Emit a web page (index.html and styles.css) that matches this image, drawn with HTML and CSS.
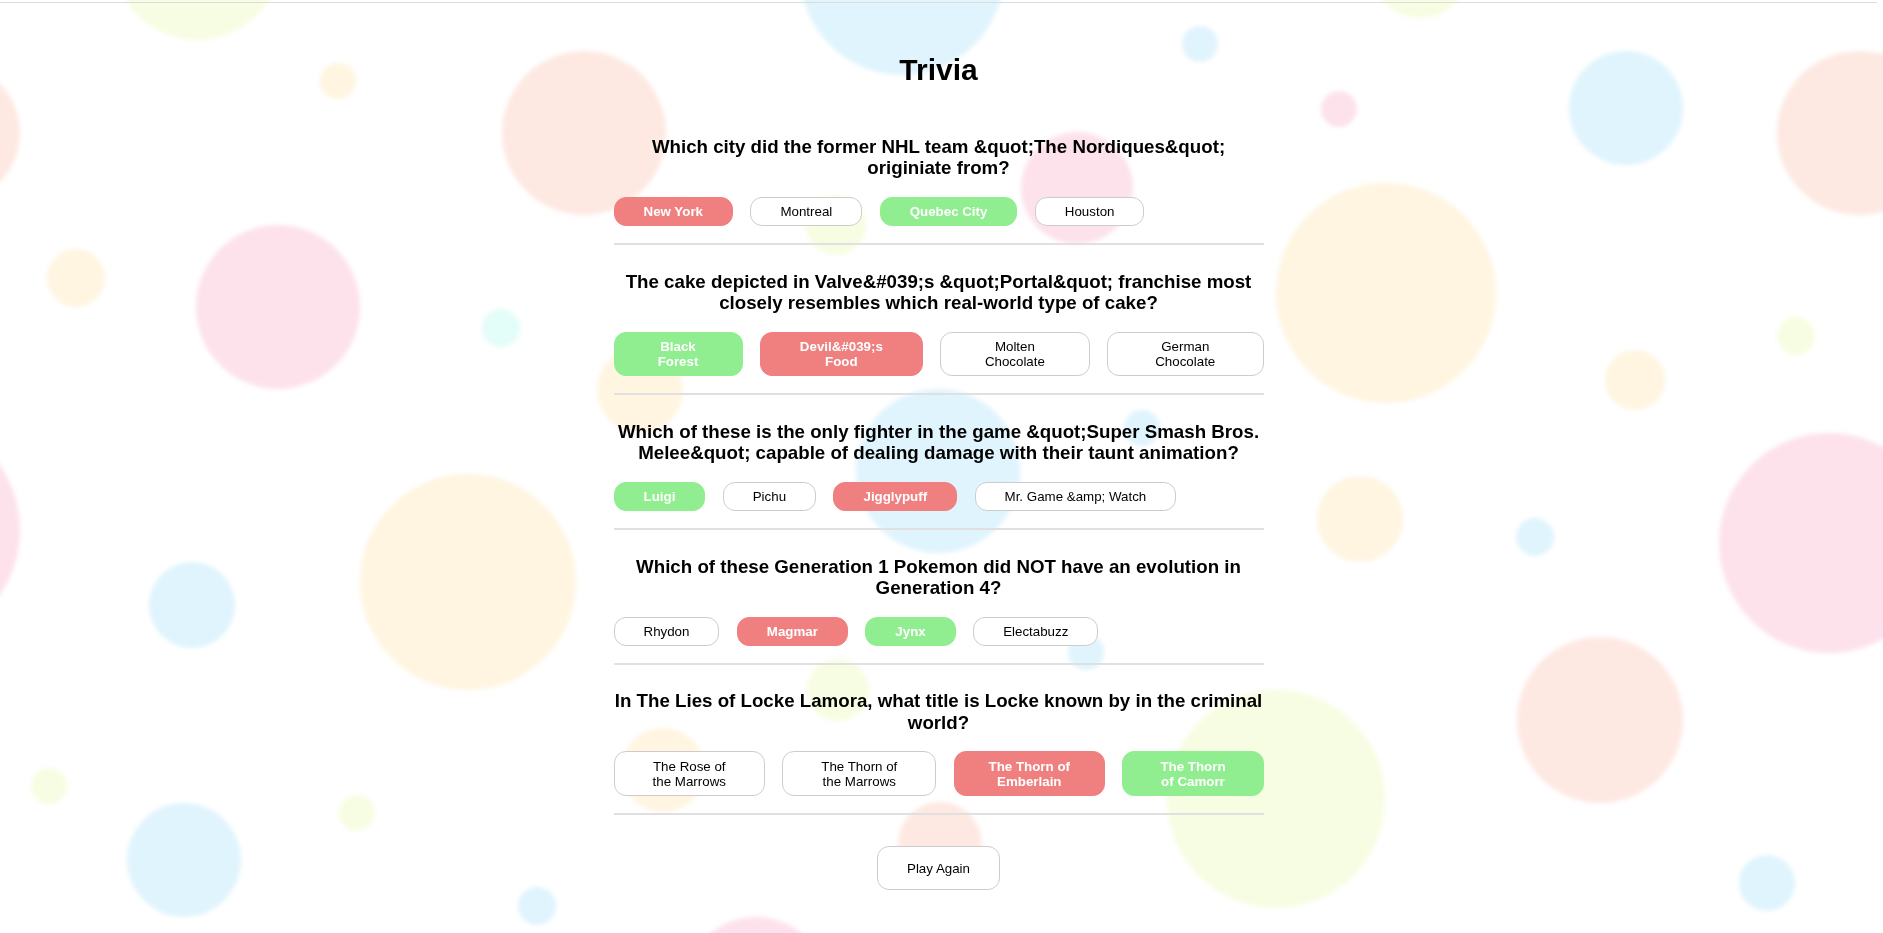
FILE: index.html
```html
<!DOCTYPE html>
<html lang="en">
<head>
<meta charset="utf-8">
<title>Trivia</title>
<link rel="stylesheet" href="styles.css">
</head>
<body>
<div class="bubbles" aria-hidden="true">
  <span class="bubble yg b1"></span><span class="bubble cream b2"></span><span class="bubble peach b3"></span>
  <span class="bubble peach b4"></span><span class="bubble pink b5"></span><span class="bubble cream b6"></span>
  <span class="bubble mint b7"></span><span class="bubble cream b8"></span><span class="bubble blue b9"></span>
  <span class="bubble blue b10"></span><span class="bubble pink b11"></span><span class="bubble pink b12"></span>
  <span class="bubble yg b13"></span><span class="bubble blue b14"></span><span class="bubble peach b15"></span>
  <span class="bubble cream b16"></span><span class="bubble yg b17"></span><span class="bubble cream b18"></span>
  <span class="bubble pink b19"></span><span class="bubble pink b20"></span><span class="bubble cream b21"></span>
  <span class="bubble blue b22"></span><span class="bubble yg b23"></span><span class="bubble blue b24"></span>
  <span class="bubble yg b25"></span><span class="bubble blue b26"></span><span class="bubble pink b27"></span>
  <span class="bubble peach b28"></span><span class="bubble cream b29"></span><span class="bubble yg b30"></span>
  <span class="bubble yg b31"></span><span class="bubble blue b32"></span><span class="bubble blue b33"></span>
  <span class="bubble blue b34"></span><span class="bubble cream b35"></span><span class="bubble blue b36"></span>
  <span class="bubble peach b37"></span><span class="bubble yg b38"></span><span class="bubble blue b39"></span>
</div>

<div class="page">
  <div class="topline"></div>
  <main class="quiz">
    <h1 class="title">Trivia</h1>

    <section class="question">
      <h3 class="q-text">Which city did the former NHL team &amp;quot;The Nordiques&amp;quot; originiate from?</h3>
      <div class="answers">
        <button class="answer wrong">New York</button>
        <button class="answer">Montreal</button>
        <button class="answer right">Quebec City</button>
        <button class="answer">Houston</button>
      </div>
    </section>

    <section class="question">
      <h3 class="q-text">The cake depicted in Valve&amp;#039;s &amp;quot;Portal&amp;quot; franchise most closely resembles which real-world type of cake?</h3>
      <div class="answers">
        <button class="answer right">Black Forest</button>
        <button class="answer wrong">Devil&amp;#039;s Food</button>
        <button class="answer">Molten Chocolate</button>
        <button class="answer">German Chocolate</button>
      </div>
    </section>

    <section class="question">
      <h3 class="q-text">Which of these is the only fighter in the game &amp;quot;Super Smash Bros. Melee&amp;quot; capable of dealing damage with their taunt animation?</h3>
      <div class="answers">
        <button class="answer right">Luigi</button>
        <button class="answer">Pichu</button>
        <button class="answer wrong">Jigglypuff</button>
        <button class="answer">Mr. Game &amp;amp; Watch</button>
      </div>
    </section>

    <section class="question">
      <h3 class="q-text">Which of these Generation 1 Pokemon did NOT have an evolution in Generation 4?</h3>
      <div class="answers">
        <button class="answer">Rhydon</button>
        <button class="answer wrong">Magmar</button>
        <button class="answer right">Jynx</button>
        <button class="answer">Electabuzz</button>
      </div>
    </section>

    <section class="question">
      <h3 class="q-text">In The Lies of Locke Lamora, what title is Locke known by in the criminal world?</h3>
      <div class="answers">
        <button class="answer">The Rose of the Marrows</button>
        <button class="answer">The Thorn of the Marrows</button>
        <button class="answer wrong">The Thorn of Emberlain</button>
        <button class="answer right">The Thorn of&nbsp;Camorr</button>
      </div>
    </section>

    <div class="actions">
      <button class="play-again">Play Again</button>
    </div>
  </main>
</div>
</body>
</html>
```

FILE: styles.css
```css
html, body {
  margin: 0;
  padding: 0;
  background: #ffffff;
}

body {
  font-family: "Liberation Sans", Arial, sans-serif;
  color: #000;
  overflow: hidden;
}

/* decorative background bubbles */
.bubbles {
  position: fixed;
  inset: 0;
  overflow: hidden;
  z-index: 0;
}

.bubble {
  position: absolute;
  border-radius: 50%;
  filter: blur(2px);
}

.blue { background: #e0f4fd; }
.pink { background: #fde2ec; }
.peach { background: #fde9e2; }
.cream { background: #fff5e1; }
.yg { background: #f7fde2; }
.mint { background: #e3fdf8; }

.b1 { left: 113px; top: -128px; width: 168px; height: 168px; }
.b2 { left: 320px; top: 63px; width: 36px; height: 36px; }
.b3 { left: -120px; top: 63px; width: 140px; height: 140px; }
.b4 { left: 502px; top: 51px; width: 164px; height: 164px; }
.b5 { left: 196px; top: 225px; width: 164px; height: 164px; }
.b6 { left: 47px; top: 249px; width: 58px; height: 58px; }
.b7 { left: 482px; top: 309px; width: 38px; height: 38px; }
.b8 { left: 597px; top: 347px; width: 86px; height: 86px; }
.b9 { left: 800px; top: -129px; width: 204px; height: 204px; }
.b10 { left: 1182px; top: 26px; width: 36px; height: 36px; }
.b11 { left: 1021px; top: 132px; width: 112px; height: 112px; }
.b12 { left: 1321px; top: 91px; width: 36px; height: 36px; }
.b13 { left: 1370px; top: -82px; width: 100px; height: 100px; }
.b14 { left: 1569px; top: 51px; width: 114px; height: 114px; }
.b15 { left: 1777px; top: 51px; width: 164px; height: 164px; }
.b16 { left: 1276px; top: 183px; width: 220px; height: 220px; }
.b17 { left: 1777px; top: 317px; width: 38px; height: 38px; }
.b18 { left: 1605px; top: 350px; width: 60px; height: 60px; }
.b19 { left: 1719px; top: 433px; width: 220px; height: 220px; }
.b20 { left: -210px; top: 415px; width: 230px; height: 230px; }
.b21 { left: 360px; top: 474px; width: 216px; height: 216px; }
.b22 { left: 149px; top: 562px; width: 86px; height: 86px; }
.b23 { left: 31px; top: 768px; width: 36px; height: 36px; }
.b24 { left: 127px; top: 803px; width: 114px; height: 114px; }
.b25 { left: 339px; top: 795px; width: 36px; height: 36px; }
.b26 { left: 518px; top: 887px; width: 38px; height: 38px; }
.b27 { left: 684px; top: 917px; width: 144px; height: 144px; }
.b28 { left: 898px; top: 802px; width: 84px; height: 84px; }
.b29 { left: 621px; top: 728px; width: 84px; height: 84px; }
.b30 { left: 807px; top: 659px; width: 62px; height: 62px; }
.b31 { left: 806px; top: 195px; width: 60px; height: 60px; }
.b32 { left: 856px; top: 389px; width: 164px; height: 164px; }
.b33 { left: 1124px; top: 410px; width: 36px; height: 36px; }
.b34 { left: 1068px; top: 634px; width: 36px; height: 36px; }
.b35 { left: 1317px; top: 476px; width: 86px; height: 86px; }
.b36 { left: 1516px; top: 518px; width: 38px; height: 38px; }
.b37 { left: 1517px; top: 637px; width: 166px; height: 166px; }
.b38 { left: 1167px; top: 690px; width: 218px; height: 218px; }
.b39 { left: 1739px; top: 855px; width: 56px; height: 56px; }

/* page */
.page {
  position: relative;
  z-index: 1;
  padding-right: 6px;
}

.topline {
  margin-top: 2px;
  height: 1px;
  background: #dcdcdc;
}

.quiz {
  width: 650px;
  margin: 0 auto;
}

.title {
  margin: 49.5px 0 23.9px;
  font-size: 30px;
  line-height: 34px;
  font-weight: bold;
  text-align: center;
}

.question {
  padding: 25.6px 0 16.8px;
  border-bottom: 2px solid #e0e0e0;
}

.q-text {
  margin: 0 0 17.9px;
  font-size: 18.72px;
  line-height: 21.5px;
  font-weight: bold;
  text-align: center;
}

.answers {
  display: flex;
  align-items: flex-start;
  gap: 17.4px;
}

.answer,
.play-again {
  font-family: "Liberation Sans", Arial, sans-serif;
  font-size: 13.333px;
  line-height: normal;
  color: #000;
  background: #fff;
  border: 1px solid #cccccc;
  border-radius: 12px;
  padding: 6.3px 29px;
  text-align: center;
  cursor: pointer;
}

.answer {
  flex: 0 1 auto;
}

.answer.wrong {
  background: #f08080;
  border-color: #f08080;
  color: #fff;
  font-weight: bold;
}

.answer.right {
  background: #90ee90;
  border-color: #90ee90;
  color: #fff;
  font-weight: bold;
}

.actions {
  display: flex;
  justify-content: center;
  padding-top: 31.7px;
}

.play-again {
  padding: 13.5px 29px;
}
```
